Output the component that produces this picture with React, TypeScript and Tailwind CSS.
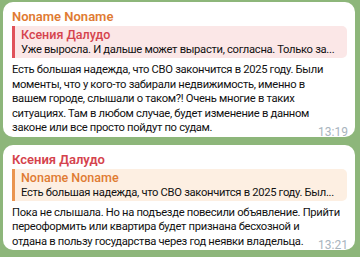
import React from 'react';

interface Reply {
  name: string;
  text: string;
  tone: 'red' | 'orange';
}

interface MessageProps {
  author: string;
  authorTone: 'red' | 'orange';
  reply: Reply;
  lines: string[];
  time: string;
}

const nameColor = {
  red: 'text-[#d5434d]',
  orange: 'text-[#e07b32]'
};

const replyBox = {
  red: 'border-[#e0525a] bg-[#fbe7e7]',
  orange: 'border-[#ea9550] bg-[#fdefe2]'
};

const Message = ({ author, authorTone, reply, lines, time }: MessageProps) => {
  const last = lines[lines.length - 1];
  return <div className="w-[352px] rounded-[10px] bg-white pl-[9px] pr-[7px] pt-[7px] pb-[1px]">
      <p className={`text-[13px] leading-[16px] font-semibold ${nameColor[authorTone]}`}>
        {author}
      </p>
      <div className={`mt-[1px] mr-[1px] overflow-hidden rounded-r-[5px] border-l-[3px] pl-[6px] pt-[1px] pb-[1px] ${replyBox[reply.tone]}`}>
        <p className={`text-[12.5px] leading-[15px] font-medium ${nameColor[reply.tone]}`}>
          {reply.name}
        </p>
        <p className="text-[11.2px] leading-[15px] tracking-[-0.3px] text-[#111] whitespace-nowrap">
          {reply.text}
        </p>
      </div>
      <div className="mt-[5px] text-[11.2px] leading-[14.5px] tracking-[-0.3px] text-[#111]">
        {lines.slice(0, -1).map(line => <p key={line} className="whitespace-nowrap">{line}</p>)}
        <div className="flex items-end justify-between">
          <p className="whitespace-nowrap">{last}</p>
          <span className="text-[12px] leading-[14px] tracking-normal text-[#a8b4be] translate-y-[3px]">{time}</span>
        </div>
      </div>
    </div>;
};

export default function App() {
  return <div className="h-[257px] w-[360px] overflow-hidden bg-[#8db67a] pl-[3px] pt-[2px]" style={{ fontFamily: 'Roboto, "Noto Sans", sans-serif' }}>
      <div className="flex flex-col gap-[8px]">
        <Message author="Noname Noname" authorTone="orange" reply={{
        name: 'Ксения Далудо',
        text: 'Уже выросла. И дальше может вырасти, согласна. Только за...',
        tone: 'red'
      }} lines={['Есть большая надежда, что СВО закончится в 2025 году. Были', 'моменты, что у кого-то забирали недвижимость, именно в', 'вашем городе, слышали о таком?! Очень многие в таких', 'ситуациях. Там в любом случае, будет изменение в данном', 'законе или все просто пойдут по судам.']} time="13:19" />
        <Message author="Ксения Далудо" authorTone="red" reply={{
        name: 'Noname Noname',
        text: 'Есть большая надежда, что СВО закончится в 2025 году. Был...',
        tone: 'orange'
      }} lines={['Пока не слышала. Но на подъезде повесили объявление. Прийти', 'переоформить или квартира будет признана бесхозной и', 'отдана в пользу государства через год неявки владельца.']} time="13:21" />
      </div>
    </div>;
}
